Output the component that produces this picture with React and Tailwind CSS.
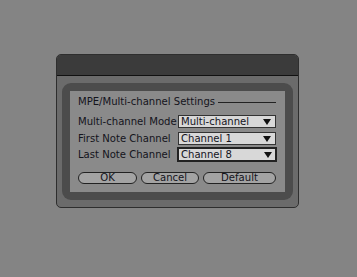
import React from "react";

function Select({ value, focused }) {
  return (
    <div
      className={
        "flex items-center justify-between bg-[#d8d8d8] text-[#14141c] shrink-0 " +
        (focused
          ? "w-[100px] h-[15px] border-2 border-[#222] pl-[2px] pr-[3px]"
          : "w-[98px] h-[13px] border border-[#333] pl-[2px] pr-[4px]")
      }
    >
      <span className="leading-none">{value}</span>
      <svg width="8" height="6" viewBox="0 0 8 6">
        <polygon points="0,0 8,0 4,6" fill="#111" />
      </svg>
    </div>
  );
}

function Button({ children, w }) {
  return (
    <div
      className={
        "h-[12px] rounded-full border border-[#222] bg-[#a3a3a3] flex items-center justify-center text-[#14141c] leading-none " +
        w
      }
    >
      {children}
    </div>
  );
}

export default function App() {
  return (
    <div
      className="w-[357px] h-[277px] bg-[#848484] pt-[54px] pl-[56px]"
      style={{ fontFamily: '"DejaVu Sans Condensed", "DejaVu Sans", sans-serif' }}
    >
      <div className="w-[243px] h-[154px] rounded-[5px] border border-[#2e2e2e] bg-[#6b6b6b] flex flex-col overflow-hidden">
        <div className="h-[21px] bg-[#3b3b3b] border-b border-[#111] shrink-0" />
        <div className="pt-[7px] px-[5px]">
          <div className="rounded-[9px] bg-[#4c4c4c] p-[8px] pt-[8px]">
            <div className="bg-[#8a8a8a] h-[101px] pl-[8px] pr-[9px] pt-[5px] text-[11.2px] text-[#14141c]">
              <div className="flex items-center h-[12px]">
                <span className="leading-none whitespace-nowrap">MPE/Multi-channel Settings</span>
                <div className="flex-1 ml-[3px] h-px bg-[#222]" />
              </div>
              <div className="flex items-center justify-between mt-[7px] h-[13px]">
                <span className="leading-none whitespace-nowrap">Multi-channel Mode</span>
                <Select value="Multi-channel" />
              </div>
              <div className="flex items-center justify-between mt-[4px] h-[13px]">
                <span className="leading-none whitespace-nowrap">First Note Channel</span>
                <Select value="Channel 1" />
              </div>
              <div className="flex items-center justify-between mt-[2px] h-[15px] -mr-[1px]">
                <span className="leading-none whitespace-nowrap">Last Note Channel</span>
                <Select value="Channel 8" focused />
              </div>
              <div className="flex items-center mt-[10px] gap-[4px]">
                <Button w="w-[59px]">OK</Button>
                <Button w="w-[58px]">Cancel</Button>
                <Button w="w-[73px]">Default</Button>
              </div>
            </div>
          </div>
        </div>
      </div>
    </div>
  );
}
